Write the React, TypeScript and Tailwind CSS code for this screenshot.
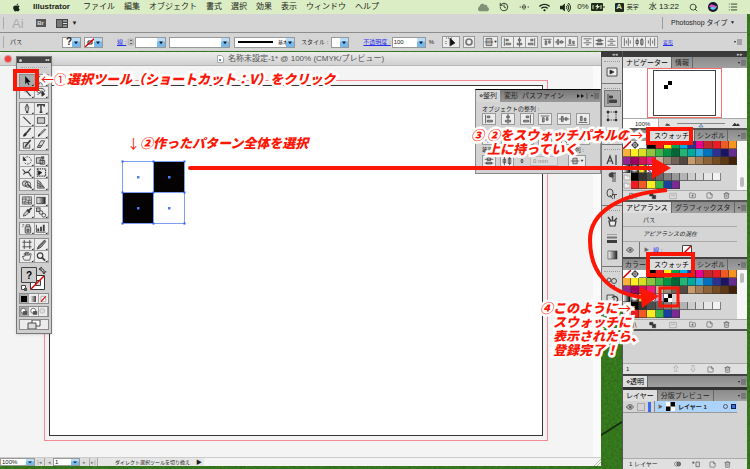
import React from 'react';
import clsx from 'clsx';
import { twMerge } from 'tailwind-merge';
import { FaApple, FaCloud, FaWifi, FaVolumeUp } from 'react-icons/fa';
import { History, Search, Eye, Trash2, FolderPlus, StickyNote, List } from 'lucide-react';

type Shape = React.ReactNode;

const Glyph: React.FC<{ children: Shape; className?: string }> = ({ children, className }) => (
  <svg
    viewBox="0 0 14 12"
    className={twMerge('h-3 w-3.5 shrink-0', className)}
    fill="none"
    stroke="#3c3c3c"
    strokeWidth=".9"
  >
    {children}
  </svg>
);

const toolGroups: [string, Shape][][] = [
  [
    ['選択', <path d="M5 1v9l2-2 1.500 3 1.200-.6L8.300 7.500H11z" fill="#111" stroke="none" />],
    ['ダイレクト選択', <path d="M5 1v9l2-2 1.500 3 1-.5L8.300 7.500H11z" fill="#fff" strokeWidth=".8" />],
    ['自動選択', <><path d="M6 4l5 6" strokeWidth="1.500" /><path d="M5 1v5M2.500 3.500h5" strokeWidth=".6" /></>],
    ['なげなわ', <><path d="M3 3c3-3 8-1 8 1s-4 3-7 2 0-3 2-2-1 4-3 4" /><path d="M8 4v6l3-2z" fill="#222" /></>],
  ],
  [
    ['ペン', <><path d="M7 1L5 5l1 4h2l1-4zM7 2v4" fill="#ddd" /><path d="M6 10h2.500" strokeWidth="2" /></>],
    ['文字', <path d="M3.500 4V2h7v2M7 2v8M5.500 10h3" strokeWidth="1.600" />],
    ['直線', <path d="M3 2l8 8" strokeWidth="1.200" />],
    ['長方形', <rect x="3" y="3" width="8" height="6" fill="#c8c8c8" />],
    ['ブラシ', <><path d="M11 1L6 7" strokeWidth="1.800" /><path d="M3 10c1-3 2-4 3-3s0 3-3 3z" fill="#222" /></>],
    ['鉛筆', <><path d="M11 2L5 8 4 10l2-1 6-6z" fill="#ccc" /><path d="M4 10l2-2" strokeWidth="1.500" /></>],
    ['塗りブラシ', <><path d="M9 4H3v6h7V6" fill="#ddd" /><path d="M11 1L6 7l-1 2" strokeWidth="1.800" /></>],
    ['消しゴム', <><path d="M7 2h4L7 9H3z" fill="#ddd" /><path d="M4 7h4M3 9h4" /></>],
  ],
  [
    ['回転', <><path d="M4 4a4 4 0 117 4c-2 3-6 2-7 0" strokeDasharray="2 1" /><path d="M3 2v4h3z" fill="#222" /></>],
    ['拡大縮小', <><path d="M2 3h7v6H2zM6 6h5v4H6z" fill="#ccc" /><path d="M5 6l5-4M7 2h3v3" /></>],
    ['ワープ', <><path d="M2 3c3 0 1 4 5 3s2 4 5 4M3 8c4-5 5 0 8-6" strokeWidth="1.200" /></>],
    ['自由変形', <><path d="M3 2h9v8H3z" strokeDasharray="1.500 1" strokeWidth="1.300" /><path d="M4 4v5l4-3z" fill="#111" /></>],
    ['シェイプ形成', <><circle cx="5" cy="5" r="3" fill="#ccc" /><circle cx="8" cy="6" r="3" /><path d="M8 6l4 4" strokeWidth="1.500" /></>],
    ['遠近グリッド', <><path d="M3 1v9h8L6 3z" fill="#bbb" strokeWidth=".7" /><path d="M3 4l6 4M3 7l7 2M6 3v7" strokeWidth=".7" /></>],
  ],
  [
    ['メッシュ', <><path d="M2 2h10v8H2z" fill="#ccc" strokeWidth=".7" /><path d="M2 5c4-3 5 4 10 0M2 8c4-2 6 2 10 0M5 2c3 3-2 5 0 8M9 2c2 3-2 5 0 8" strokeWidth=".7" /></>],
    ['グラデーション', <rect x="2.500" y="2.500" width="9" height="7" fill="url(#tone)" />],
    ['スポイト', <><path d="M3 10l1-3 4-4 2 2-4 4z" fill="#ccc" /><path d="M7 3l3 3M9 4l3-3" strokeWidth="2" /></>],
    ['ブレンド', <><rect x="2" y="1" width="4" height="4" fill="#bbb" /><circle cx="7" cy="6" r="2" fill="#ddd" /><circle cx="10" cy="9" r="2" fill="#eee" /></>],
  ],
  [
    ['スプレー', <><rect x="5" y="4" width="6" height="7" rx="1" fill="#bbb" /><path d="M6 4V2h4v2M2 2h2M2 4h1M7 7h2v2H7z" /></>],
    ['グラフ', <><path d="M2 2v8h10" /><path d="M4 9V6M7 9V4M10 9V2" strokeWidth="2" /></>],
  ],
  [
    ['アートボード', <path d="M4 1v10M10 1v10M2 3.500h10M2 8.500h10" strokeWidth=".9" />],
    ['スライス', <><path d="M11 1L5 7l-2 4 4-2 5-6z" fill="#999" /><path d="M3 10L11 2" /></>],
    ['手のひら', <path d="M4 10L2 6l2 0V2.500l1.500 0V5 1.500H7V5l.5-3.500H9V5l1-2h1.500L10 10z" fill="#eee" strokeWidth=".8" />],
    ['ズーム', <><circle cx="6" cy="5" r="3" fill="#eee" strokeWidth="1.300" /><path d="M8 7l3.500 3.500" strokeWidth="2" /></>],
  ],
];

const alignShapes: Shape[] = [
  <><path d="M3 1v10" /><path d="M5 2.500h3v2H5zM5 7.500h6v2H5z" fill="#aaa" strokeWidth=".8" /></>,
  <><path d="M7 0v12" /><path d="M5.500 2.500h3v2h-3zM4 7.500h6v2H4z" fill="#aaa" strokeWidth=".8" /></>,
  <><path d="M11 1v10" /><path d="M6 2.500h3v2H6zM3 7.500h6v2H3z" fill="#aaa" strokeWidth=".8" /></>,
  <><path d="M2 2.500h10" /><path d="M4 4.500h2v5H4zM8.500 4.500h2v3h-2z" fill="#aaa" strokeWidth=".8" /></>,
  <><path d="M1 6h12" /><path d="M4 3h2v6H4zM8.500 4.500h2v3h-2z" fill="#aaa" strokeWidth=".8" /></>,
  <><path d="M2 10h10" /><path d="M4 3h2v5H4zM8.500 5h2v3h-2z" fill="#aaa" strokeWidth=".8" /></>,
];

const distributeShapes: Shape[] = [
  <path d="M2 2h10M5 4.500h4M2 7h10M5 9.500h4" />,
  <path d="M2 4h10M5 2.500h4v3H5zM2 8.500h10M4 7.500h6v2H4z" />,
  <path d="M5 2.500h4M2 5h10M5 7.500h4M2 10h10" />,
];

const spreadShapes: Shape[] = [
  <path d="M3 1v10M5.500 4v4M8 1v10M10.500 4v4" />,
  <path d="M4 1v10M2.500 4h3v4h-3zM10 1v10M8.500 3h3v6h-3z" />,
  <path d="M3 4v4M5.500 1v10M8.500 4v4M11 1v10" />,
];

const processColors = [
  '#fbb03b', '#fcee21', '#d9e021', '#8cc63f', '#39b54a', '#009245', '#006837', '#22b573', '#00a99d', '#29abe2', '#0071bc', '#2e3192', '#1b1464', '#662d91',
  '#93278f', '#9e005d', '#d4145a', '#ed1e79', '#c7b299', '#998675', '#736357', '#534741', '#c69c6d', '#a67c52', '#8c6239', '#754c24', '#603813', '#42210b',
];
const baseColors = ['#ffffff', '#000000', '#ed1c24', '#fff200', '#00a651', '#00aeef', '#2e3192', '#ec008c', '#c1272d', '#ed1c24', '#f15a24', '#f7931e'];
const grays = ['#000', '#333', '#4d4d4d', '#666', '#808080', '#999', '#b3b3b3', '#ccc', '#dadada', '#e6e6e6', '#f2f2f2'];
const brights = ['#ed1c24', '#f15a24', '#fcee21', '#39b54a', '#1b3fa0', '#7a2a91'];

const IconButton: React.FC<{ label: string; children: Shape; className?: string }> = ({ label, children, className }) => (
  <button type="button" aria-label={label} className={clsx('flex items-center justify-center overflow-hidden', className)}>
    {children}
  </button>
);

const BlueArrow = () => (
  <svg viewBox="0 0 8 10" preserveAspectRatio="none" className="pointer-events-none absolute inset-y-0 right-0 h-full w-2">
    <rect width="8" height="10" fill="#78b9ec" />
    <rect width="8" height="4" fill="#b9dcf7" />
    <path d="M2 4h4L4 7z" fill="#0b1c33" />
  </svg>
);

interface DropProps {
  label: string;
  value?: string;
  className?: string;
  children?: Shape;
}

const Drop: React.FC<DropProps> = ({ label, value = '', className, children }) => (
  <span className={twMerge('relative flex h-[11px] shrink-0 items-center border border-[#999] bg-white', className)}>
    {children}
    <select
      aria-label={label}
      defaultValue={value}
      className="absolute inset-0 h-full w-full appearance-none bg-transparent pl-px text-[6px] leading-none outline-none"
    >
      <option value={value}>{value}</option>
    </select>
    <BlueArrow />
  </span>
);

const PanelMenu = () => (
  <svg viewBox="0 0 8 6" className="my-auto mr-px ml-auto h-1.5 w-2 shrink-0" stroke="#333" strokeWidth=".6">
    <path d="M3 1h5M3 3h5M3 5h5" />
    <path d="M0 2h2L1 4z" fill="#222" stroke="none" />
  </svg>
);

const Tabs: React.FC<{ items: string[]; active: number }> = ({ items, active }) => (
  <div className="flex h-[11px] shrink-0 items-stretch bg-linear-to-b from-[#8b8b8b] to-[#a0a0a0] text-[7px] leading-[11px]" role="tablist">
    {items.map((t, i) => (
      <button
        key={t}
        type="button"
        role="tab"
        aria-selected={i === active}
        className={clsx(
          'shrink-0 border-r border-[#666] whitespace-nowrap',
          items.length > 2 && i !== active ? 'px-0.5' : items.length > 2 ? 'px-[5px]' : 'px-[3px]',
          i === active ? 'bg-[#dedede] text-black' : 'text-[#222]'
        )}
      >
        {t}
      </button>
    ))}
    <PanelMenu />
  </div>
);

const MenuBar = () => (
  <header className="flex h-3.5 shrink-0 items-center bg-[#daedc4] pr-3 pl-3 text-[8px] leading-none text-[#1c2418]">
    <FaApple className="mr-3 size-[9px]" />
    <nav className="flex items-center gap-[9px] whitespace-nowrap">
      <strong className="mr-1">Illustrator</strong>
      {['ファイル', '編集', 'オブジェクト', '書式', '選択', '効果', '表示', 'ウィンドウ', 'ヘルプ'].map(m => (
        <button key={m} type="button">{m}</button>
      ))}
    </nav>
    <div className="ml-auto flex items-center gap-2.5 whitespace-nowrap">
      <FaCloud className="size-[11px] text-[#829079]" />
      <History className="size-[10px]" />
      <Glyph className="w-2.5"><path d="M1 6h2M5 4v4M7 2v8M9 4v4M12 6h2" strokeWidth="1.300" /></Glyph>
      <FaWifi className="size-[11px]" />
      <span className="flex items-center gap-1.5">
        <FaVolumeUp className="size-[11px]" />
        <span>0%</span>
        <svg viewBox="0 0 14 8" className="-ml-1 h-2 w-3.5">
          <rect width="12" height="8" rx="1" fill="#20291b" />
          <path d="M13 3v2" stroke="#20291b" />
          <path d="M7 1L4 4h2L5 7l4-4H7z" fill="#daedc4" />
          <path d="M2 2v4M10 2v4" stroke="#daedc4" />
        </svg>
      </span>
      <span className="flex items-center gap-[3px]">
        <span className="flex size-[9px] items-center justify-center rounded-[1px] bg-[#20291b] font-bold text-[#daedc4]">A</span>
        <span className="text-[6px]">英字</span>
      </span>
      <span>水 13:22</span>
      <Search className="size-[9px]" />
      <svg viewBox="0 0 10 10" className="size-[10px]">
        <circle cx="5" cy="5" r="5" fill="#17152c" />
        <path d="M1 5c2-5 5-1 8-1-2 5-5 1-8 1z" fill="#d552bf" />
        <path d="M2 6c3-3 4 2 7-2-1 4-5 5-7 2z" fill="#4cd6ee" />
      </svg>
      <List className="size-[10px]" />
    </div>
  </header>
);

const AppBar = () => (
  <div className="flex h-[19px] shrink-0 items-center border-b border-[#8d8d8d] bg-[#d5d5d5] pr-3 pl-[3px] text-[7px]">
    <span className="mr-2 h-3 w-px bg-[#aaa]" />
    <span className="text-[13px] leading-none text-[#aaa]">Ai</span>
    <span className="ml-3 flex h-2 w-2.5 items-center justify-center bg-[#555] text-[6px] font-bold text-[#ddd]">Br</span>
    <svg viewBox="0 0 12 9" className="ml-2.5 h-[9px] w-3">
      <rect width="12" height="9" fill="#444" />
      <path d="M1 1h5v7H1z" fill="#777" />
      <path d="M7 2h4M7 4.500h4M7 7h4" stroke="#ddd" />
    </svg>
    <span className="ml-1 text-[6px]">▼</span>
    <label className="ml-auto flex h-3 items-center border-l border-[#999] pl-2">
      <select aria-label="ワークスペース" className="appearance-none bg-transparent whitespace-nowrap outline-none">
        <option>Photoshop タイプ</option>
      </select>
      <span className="ml-0.5 text-[5px]">▼</span>
    </label>
  </div>
);

const ButtonStrip: React.FC<{ name: string; shapes: Shape[] }> = ({ name, shapes }) => (
  <span className="flex h-3 border-y border-l border-[#999]">
    {shapes.map((s, i) => (
      <IconButton key={i} label={`${name}${i + 1}`} className="w-3 border-r border-[#999] bg-[#ededed]">
        <Glyph className="h-2.5 w-[11px]">{s}</Glyph>
      </IconButton>
    ))}
  </span>
);

const ControlBar = () => (
  <div className="flex h-[18px] shrink-0 items-center overflow-hidden bg-[#d5d5d5] pr-1 pl-[3px] text-[6px] leading-none whitespace-nowrap">
    <span className="mr-1.5 h-3 w-px bg-[#aaa]" />
    <span className="w-[52px]">パス</span>
    <Drop label="塗り" className="w-[19px]"><b className="pl-[3px] text-[10px]">?</b></Drop>
    <Drop label="線" className="ml-[3px] w-[19px]">
      <svg viewBox="0 0 10 9" className="h-[9px] w-2.5"><path d="M3 3h4v3H3z" fill="none" stroke="#222" /><path d="M0 9L10 0" stroke="#d00" strokeWidth="1.400" /></svg>
    </Drop>
    <a href="#stroke" className="ml-3.5 w-2.5 text-[#2630ee] underline">線 :</a>
    <Glyph className="w-2"><path d="M2 1h9v10H2zM2 6h9" fill="#ddd" stroke="#888" /><path d="M4 4l3-2 3 2zM4 8l3 2 3-2z" fill="#222" stroke="none" /></Glyph>
    <Drop label="線幅" className="w-[31px]" />
    <Drop label="可変線幅" className="ml-[3px] w-[61px]" />
    <Drop label="ブラシ定義" className="ml-1 w-[61px]"><span className="mx-[3px] h-0.5 w-[35px] bg-black" /><span className="ml-0.5 text-[5px]">基本</span></Drop>
    <span className="ml-1.5">スタイル :</span>
    <Drop label="スタイル" className="ml-[3px] w-[18px]" />
    <a href="#opacity" className="ml-3.5 text-[#2630ee] underline">不透明度 :</a>
    <span className="relative ml-px flex h-[11px] w-[34px] border border-[#999] bg-white">
      <input aria-label="不透明度" defaultValue="100" className="w-full pl-px text-[6px] outline-none" />
      <BlueArrow />
    </span>
    <span className="ml-[3px]">%</span>
    <div className="ml-2 flex items-center gap-[3px]">
      <IconButton label="類似オブジェクト" className="h-3 w-[18px] border border-[#999] bg-[#ededed]">
        <Glyph><path d="M2 2h3M7 2h2M2 5v3" strokeDasharray="1 1" /><path d="M6 2v8l5-3z" fill="#111" /></Glyph>
      </IconButton>
      <IconButton label="オブジェクトを再配色" className="h-3 w-3 border border-[#999] bg-[#ededed]">
        <Glyph className="w-3"><circle cx="7" cy="6" r="3.500" stroke="#777" strokeWidth="2" /></Glyph>
      </IconButton>
      <IconButton label="整列基準" className="ml-[5px] h-3 w-[15px] border border-[#999] bg-[#ededed]">
        <Glyph className="w-2.5"><path d="M3 1h8v10H3z" fill="#bbb" /><path d="M1 6h12" /></Glyph><span className="text-[4px]">▼</span>
      </IconButton>
      <ButtonStrip name="水平方向整列" shapes={alignShapes.slice(0, 3)} />
      <ButtonStrip name="垂直方向整列" shapes={alignShapes.slice(3)} />
      <ButtonStrip name="垂直方向分布" shapes={distributeShapes} />
      <ButtonStrip name="水平方向分布" shapes={spreadShapes} />
    </div>
    <a href="#transform" className="ml-[5px] text-[5px] text-[#2630ee] underline">変形</a>
    <PanelMenu />
  </div>
);

const ToolPanel = () => (
  <aside aria-label="ツール" className="absolute top-1 left-4 z-10 w-9 border border-[#777] bg-[#cfcfcf] shadow">
    <div className="flex h-1.5 items-center justify-between bg-[#444] px-0.5 text-[4px] text-white">
      <span className="size-[3px] rounded-full bg-[#ccc]" /><span>◂◂</span>
    </div>
    <div className="mx-1 my-1 border-t border-dotted border-[#aaa]" />
    <div className="flex flex-col gap-[3px] px-[2px] pt-[2px]">
      {toolGroups.map((g, gi) => (
        <div key={gi} className="grid grid-cols-2 border-t border-l border-[#8c8c8c]">
          {g.map(([label, shape], i) => (
            <IconButton
              key={label}
              label={label}
              className={clsx(
                'h-3 border-r border-b border-[#a0a0a0]',
                gi === 0 && i === 0 ? 'bg-[#a9a9a9]' : 'bg-[#ececec]'
              )}
            >
              <Glyph className="h-[11px]">{shape}<path d="M14 12v-2l-2 2z" fill="#111" stroke="none" /></Glyph>
            </IconButton>
          ))}
        </div>
      ))}
    </div>
    <svg viewBox="0 0 34 30" className="h-[30px] w-[34px]">
      <defs>
        <linearGradient id="tone"><stop stopColor="#fff" /><stop offset="1" stopColor="#222" /></linearGradient>
      </defs>
      <path d="M13.500 12.500h14v14h-14z" fill="#fff" stroke="#333" />
      <path d="M18.500 17.500h5v5h-5z" fill="#ddd" stroke="#444" />
      <path d="M14 26L27 13" stroke="#d00" strokeWidth="1.500" />
      <path d="M4.500 4.500h15v15h-15z" fill="#ccc" stroke="#444" />
      <path d="M23 6q5-1 4 4M25 4l-3 2 3 2M25 8l2 3 2-3" fill="none" stroke="#333" />
      <path d="M4.500 22.500h4v4h-4z" fill="#fff" stroke="#444" />
      <path d="M7 25h3v3H7z" fill="#555" />
      <text x="12" y="16" textAnchor="middle" className="text-[10px] font-bold">?</text>
    </svg>
    <div className="mx-[2px] grid grid-cols-3 border border-[#8c8c8c] bg-[#ececec]">
      <IconButton label="カラー" className="h-[9px] border-r border-[#a0a0a0] bg-[#aaa]"><span className="size-1.5 bg-black" /></IconButton>
      <IconButton label="グラデ" className="h-[9px] border-r border-[#a0a0a0]"><span className="size-1.5 bg-linear-to-r from-white to-[#444]" /></IconButton>
      <IconButton label="なし" className="h-[9px]"><Glyph className="h-2 w-2.5"><path d="M4 2h7v8H4z" fill="#fff" stroke="#888" /><path d="M4 10l7-8" stroke="#d00" strokeWidth="1.600" /></Glyph></IconButton>
    </div>
    <div className="mx-[2px] mt-0.5 grid grid-cols-3 border border-[#8c8c8c] bg-[#ececec]">
      {['標準描画', '背面描画', '内側描画'].map((l, i) => (
        <IconButton key={l} label={l} className={clsx('h-[9px] border-r border-[#a0a0a0]', i === 0 && 'bg-[#aaa]')}>
          <Glyph className="h-[9px] w-2.5"><circle cx="6" cy="5" r="3.500" fill={i === 2 ? '#ddd' : '#fff'} stroke={i === 2 ? '#aaa' : '#333'} />{i < 2 && <path d="M6 6h5v4H6z" fill="#555" />}</Glyph>
        </IconButton>
      ))}
    </div>
    <IconButton label="スクリーンモード" className="mx-[2px] mt-0.5 mb-[3px] h-[11px] w-[30px] border border-[#8c8c8c] bg-[#ececec]">
      <Glyph><path d="M5 1h8v6H5z" fill="#fff" /><path d="M1 4h8v6H1z" fill="#ddd" /></Glyph>
    </IconButton>
  </aside>
);

const Checker = () => (
  <svg viewBox="-2 -2 67 67" className="h-[67px] w-[67px]">
    <path d="M.5.5h31v31H.5zM31.500 31.500h31v31h-31z" fill="#fff" />
    <path d="M31.500.5h31v31h-31zM.5 31.500h31v31H.5z" fill="#050203" />
    <path d="M.5.5h62v62H.5zM31.500.5v62M.5 31.500h62" fill="none" stroke="#7d9ff0" />
    {[0, 31, 62].map(x => [0, 31, 62].map(y => <rect key={`${x}-${y}`} x={x - 0.5} y={y - 0.5} width="2" height="2" fill="#2c5df0" />))}
    {[16, 47].map(x => [16, 47].map(y => <rect key={`${x}-${y}`} x={x - 1} y={y - 1} width="2.500" height="2.500" fill="#4e7cf2" />))}
  </svg>
);

const AlignPanel = () => (
  <section aria-label="整列" className="absolute top-[37px] right-0 w-[126px] border border-[#8a8a8a] border-t-black bg-[#d3d3d3] text-[6px]">
    <div className="flex h-3 items-center bg-linear-to-b from-[#777] to-[#999] text-[7px] leading-3 whitespace-nowrap">
      <button type="button" className="h-full bg-[#d8d8d8] px-[3px]">⋄整列</button>
      <button type="button" className="pl-1">変形</button>
      <button type="button" className="pl-1">パスファイン</button>
      <svg viewBox="0 0 12 6" className="ml-auto h-1.5 w-3"><path d="M1 1l3 2-3 2zM5 1l3 2-3 2z" fill="#111" /><path d="M11 0v6" stroke="#555" /></svg>
      <span className="w-3"><PanelMenu /></span>
    </div>
    <div className="flex flex-col px-1.5">
      <span className="mt-[3px] h-2 leading-2">オブジェクトの整列 :</span>
      <div className="flex justify-between pr-1">
        {alignShapes.map((s, i) => (
          <IconButton key={i} label={`整列${i + 1}`} className="h-3 w-3.5 border border-[#999] bg-[#ededed]"><Glyph className="w-3">{s}</Glyph></IconButton>
        ))}
      </div>
      <div className="mt-2 flex justify-between pr-1">
        {[...distributeShapes, ...spreadShapes].map((s, i) => (
          <IconButton key={i} label={`分布${i + 1}`} className="h-3 w-3.5 border border-[#999] bg-[#ededed]"><Glyph className="w-3">{s}</Glyph></IconButton>
        ))}
      </div>
      <div className="flex h-2.5 items-center justify-between pr-2.5"><span>等間隔</span><span>整列 :</span></div>
      <div className="mb-1.5 flex items-center gap-1">
        <IconButton label="垂直方向等間隔" className="h-3 w-3.5 border border-[#999] bg-[#ededed]"><Glyph className="w-3">{distributeShapes[1]}</Glyph></IconButton>
        <IconButton label="水平方向等間隔" className="h-3 w-3.5 border border-[#999] bg-[#ededed]"><Glyph className="w-3">{spreadShapes[1]}</Glyph></IconButton>
        <Glyph className="w-2"><path d="M4 5l3-3 3 3zM4 7l3 3 3-3z" fill="#333" stroke="none" /></Glyph>
        <input aria-label="間隔" defaultValue="0 mm" className="h-2.5 w-7 border border-[#bbb] bg-[#ddd] pl-0.5 text-[#888]" />
        <IconButton label="整列基準" className="mr-2 ml-auto h-3 w-[18px] border border-[#999] bg-[#ededed]"><Glyph className="w-2.5"><path d="M4 2h6v8H4z" fill="#bbb" /><path d="M1 6h12" /></Glyph><span className="text-[4px]">▼</span></IconButton>
      </div>
    </div>
  </section>
);

const StatusBar = () => (
  <footer className="flex h-[9px] shrink-0 items-center border-t border-[#ccc] bg-[#f4f4f4] text-[6px] leading-none">
    <Drop label="倍率" value="100%" className="h-2 w-[35px]" />
    <button type="button" className="h-2 w-[9px] bg-[#ddd] text-[5px] text-[#777]">|◂</button>
    <button type="button" className="h-2 w-[9px] border-l border-[#aaa] bg-[#ddd] text-[5px] text-[#777]">◂</button>
    <Drop label="ページ" value="1" className="h-2 w-[27px]" />
    <button type="button" className="h-2 w-[9px] bg-[#ddd] text-[5px] text-[#777]">▸</button>
    <button type="button" className="h-2 w-[9px] border-x border-[#aaa] bg-[#ddd] text-[5px] text-[#777]">▸|</button>
    <span className="flex h-2 w-[106px] items-center bg-[#e6e6e6] pl-[17px] text-[5px] whitespace-nowrap">
      ダイレクト選択ツールを切り換え<span className="ml-auto pr-0.5 text-[6px]">▶</span>
    </span>
    <svg viewBox="0 0 8 8" className="ml-auto size-2" stroke="#aaa" strokeWidth=".8"><path d="M1 8l7-7M4 8l4-4" /></svg>
  </footer>
);

const DocumentWindow = () => (
  <main className="relative mt-px mb-[3px] flex min-w-0 flex-1 flex-col bg-[#f4f4f4]">
    <div className="flex h-3.5 shrink-0 items-center justify-center rounded-t border-b border-[#b5b5b5] bg-linear-to-b from-[#ececec] to-[#d0d0d0] text-[8px] leading-none whitespace-nowrap text-[#555]">
      <div className="absolute left-[5px] flex gap-1.5">
        <span className="size-1.5 rounded-full bg-[#ee4340] ring-1 ring-[#d99]" />
        <span className="size-1.5 rounded-full bg-[#f5b62f]" />
        <span className="size-1.5 rounded-full bg-[#30bd3c]" />
      </div>
      <svg viewBox="0 0 7 8" className="mr-1 h-2 w-[7px]"><path d="M.5.5h4l2 2v5h-6z" fill="#fff" stroke="#aaa" /><path d="M2 4h2v2H2z" fill="#58a" /></svg>
      名称未設定-1* @ 100% (CMYK/プレビュー)
    </div>
    <div className="flex min-h-0 flex-1 border-r-8 border-[#fafafa] pt-3.5 pr-[45px] pb-4 pl-11">
      <div className="flex flex-1 border border-[#f48a92] p-[4px]">
        <div className="flex-1 border border-[#333] bg-white pt-[73px] pl-[70px]"><Checker /></div>
      </div>
    </div>
    <StatusBar />
    <ToolPanel />
    <AlignPanel />
  </main>
);

const dockIcons: Shape[][] = [
  [<><path d="M2 2h10v8H2z" fill="#eee" /><path d="M5 4v4l4-2z" fill="#222" /></>],
  [
    <><path d="M3 1v10" /><path d="M4.500 3h3v2h-3zM4.500 7h7v2.500h-7z" fill="#444" /></>,
    <><path d="M3 2h8v8H3z" strokeDasharray="1.500 1" /><path d="M2 1h2v2H2zM10 1h2v2h-2zM2 9h2v2H2zM10 9h2v2h-2z" fill="#222" strokeWidth=".5" /></>,
    <><path d="M2 2h6v6H2z" fill="#eee" /><path d="M6 5h6v6H6z" fill="#777" /></>,
  ],
  [
    <path d="M2 10L5 2l3 8M3 7h4M11 1v10" strokeWidth="1.200" />,
    <><path d="M8 2H6a2 2 0 000 4h2z" fill="#444" /><path d="M8 2v9M10 2v9M6 2h5" /></>,
    <><ellipse cx="5" cy="5" rx="3" ry="4" /><path d="M7 6.500h5M9.500 6.500v4M5 7l3 4" /></>,
  ],
  [
    <><path d="M4 6h7l-1 5H5z" fill="#eee" strokeWidth="1.200" /><path d="M6 6L3 2M7.500 6V1M9 6l3-3" strokeWidth="1.400" /></>,
    <><path d="M2 2.500h10" stroke="#999" /><path d="M2 5.500h10" stroke="#777" strokeWidth="2" /><path d="M2 9.500h10" strokeWidth="3" /></>,
    <rect x="3" y="2" width="9" height="8" fill="url(#tone)" strokeWidth=".6" />,
  ],
  [
    <><circle cx="4" cy="4" r="2" /><circle cx="9" cy="5" r="2.500" /><path d="M6 10h4" strokeWidth="1.500" /></>,
    <><path d="M2 2h7v7H2z" fill="#ddd" /><path d="M7 5a3 3 0 114 4" strokeWidth="1.300" /></>,
  ],
];

const IconDock = () => (
  <div className="w-[21px] shrink-0">
    <div className="h-1.5 bg-[#3a3a3a] pr-1 text-right text-[5px] leading-1.5 text-[#ccc]">◂◂</div>
    <div className="flex flex-col gap-px bg-[#777] pl-px">
      {dockIcons.map((g, gi) => (
        <div key={gi} className="flex flex-col items-center bg-[#d5d5d5] pt-1 pb-[3px]">
          <div className="mb-px w-4 border-t border-dotted border-[#999]" />
          {g.map((s, i) => (
            <IconButton
              key={i}
              label={`パネル${gi + 1}-${i + 1}`}
              className={clsx('h-[17px] w-[17px]', gi === 1 && i === 0 && 'border border-[#777] bg-[#aaa]')}
            >
              <Glyph>{s}</Glyph>
            </IconButton>
          ))}
        </div>
      ))}
    </div>
  </div>
);

const Cell: React.FC<{ color: string }> = ({ color }) => (
  <span className="h-2 border-r border-b border-[#333]/60" style={{ background: color }} />
);

const Folder = () => (
  <svg viewBox="0 0 8 8" className="h-2 w-full"><path d="M1 2h2l1 1h3v4H1z" fill="#eee" stroke="#999" strokeWidth=".7" /></svg>
);

const MiniChecker: React.FC<{ className?: string }> = ({ className }) => (
  <svg viewBox="0 0 4 4" className={className}>
    <rect width="4" height="4" fill="#fff" />
    <path d="M2 0h2v2H2zM0 2h2v2H0z" fill="#000" />
  </svg>
);

const footIcon = 'size-[7px] text-[#555]';

const PanelFooter = () => (
  <div className="flex h-2.5 items-center justify-around border-t border-[#aaa] bg-[#dcdcdc] pr-3">
    <IconButton label="ライブラリ"><Glyph className="h-2 w-2.5"><path d="M2 2h4v8H2zM8 2v8M10 2l2 8" /></Glyph></IconButton>
    <IconButton label="種類"><Glyph className="h-2 w-2.5"><path d="M2 2h5v4H2zM6 5h5v5H6z" fill="#333" /></Glyph></IconButton>
    <IconButton label="オプション"><Glyph className="h-2 w-2.5"><path d="M2 2h10v8H2zM4 5h6" stroke="#999" /></Glyph></IconButton>
    <IconButton label="グループ"><FolderPlus className={footIcon} /></IconButton>
    <IconButton label="新規"><StickyNote className={footIcon} /></IconButton>
    <IconButton label="削除"><Trash2 className={footIcon} /></IconButton>
  </div>
);

const SwatchPanel: React.FC<{ registered?: boolean }> = ({ registered }) => (
  <section aria-label="スウォッチ" className="shrink-0 border-b-2 border-[#555] bg-[#d5d5d5]">
    <Tabs items={['カラー', 'スウォッチ', 'シンボル']} active={1} />
    <div className="flex h-[49px]">
      <div className="grid flex-1 grid-cols-[repeat(14,minmax(0,1fr))] content-start">
        <svg viewBox="0 0 8 8" className="h-2 w-full bg-white"><path d="M0 8L8 0" stroke="#d00" strokeWidth="1.500" /></svg>
        <svg viewBox="0 0 8 8" className="h-2 w-full bg-white" fill="none" stroke="#222"><circle cx="4" cy="4" r="2.500" /><path d="M4 0v8M0 4h8" strokeWidth=".7" /></svg>
        {baseColors.map((c, i) => <Cell key={i} color={c} />)}
        {processColors.map(c => <Cell key={c} color={c} />)}
        <Cell color="linear-gradient(90deg,#fff,#000)" />
        <Cell color="radial-gradient(#fff 30%,#000)" />
        <Cell color="linear-gradient(90deg,#fbb03b,#fcee21,#333)" />
        <Cell color="repeating-linear-gradient(45deg,#eee 0 2px,#b4a 2px 3px)" />
        <Cell color="#c1a6d8" />
        {registered ? <MiniChecker className="h-2 w-full" /> : <span />}
        <span className="col-span-8" />
        <Folder />
        {grays.map(c => <Cell key={c} color={c} />)}
        <span className="col-span-2" />
        <Folder />
        {brights.map(c => <Cell key={c} color={c} />)}
      </div>
      <div className={clsx('flex w-2.5 flex-col bg-[#f7f7f7] p-[3px]', !registered && 'justify-end')}><div className="h-2.5 rounded-full bg-[#bbb]" /></div>
    </div>
    <PanelFooter />
  </section>
);

const MiniNav = () => (
  <svg viewBox="0 0 8 8" className="size-2"><path d="M4 0h4v4H4zM0 4h4v4H0z" fill="#000" /></svg>
);

const Navigator = () => (
  <section aria-label="ナビゲーター" className="shrink-0 border-b-2 border-[#555] bg-white">
    <Tabs items={['ナビゲーター', '情報']} active={0} />
    <div className="ml-6 h-[50px] w-[75px] border border-[#f3706e] px-[5px] py-px">
      <div className="h-full border border-[#444] pt-2.5 pl-2.5"><MiniNav /></div>
    </div>
    <div className="flex h-[10px] items-center gap-1 border-t border-[#aaa] bg-[#e2e2e2] pr-1 text-[6px]">
      <input aria-label="ズーム" defaultValue="100%" className="h-full w-9 border-r border-[#aaa] bg-white pl-3 outline-none" />
      <Glyph className="h-1.5 w-2.5"><path d="M2 9l3-4 2 3 1-2 3 3z" fill="#333" /></Glyph>
      <svg viewBox="0 0 44 8" preserveAspectRatio="none" className="h-2 min-w-0 flex-1"><path d="M0 3.500h44" stroke="#888" /><path d="M20 7l2-3 2 3z" fill="#a5d2ff" stroke="#357" strokeWidth=".5" /></svg>
      <Glyph className="h-2"><path d="M1 9l4-5 3 3 2-2 3 4z" fill="#333" stroke="none" /></Glyph>
    </div>
  </section>
);

const Appearance = () => (
  <section aria-label="アピアランス" className="shrink-0 border-b-2 border-[#444] bg-[#d5d5d5] text-[6px] leading-none">
    <Tabs items={['アピアランス', 'グラフィックスタ']} active={0} />
    <div className="mr-2.5 flex h-3.5 items-center border-b border-[#aaa] pl-5">パス</div>
    <div className="mr-2.5 flex h-[15px] items-center border-b border-[#aaa] pl-5 italic">アピアランスの混在</div>
    <div className="mr-2.5 flex h-[15px] items-center gap-1 pl-[3px]">
      <Eye className="size-2" />
      <span className="ml-px h-full border-l border-[#777]" />
      <span className="text-[5px] text-[#666]">▶</span>
      <a href="#line" className="text-[#2630ee] underline">線 :</a>
      <svg viewBox="0 0 10 10" className="ml-4 size-2.5"><path d="M.5.5h9v9h-9z" fill="#fff" stroke="#444" /><path d="M1 9l8-8" stroke="#d00" strokeWidth="1.500" /></svg>
    </div>
  </section>
);

const Layers = () => (
  <section aria-label="レイヤー" className="flex min-h-0 flex-1 flex-col bg-[#d3d3d3] text-[6px] leading-none">
    <Tabs items={['レイヤー', '分版プレビュー']} active={0} />
    <div className="mr-2.5 flex h-3 shrink-0 items-center gap-[3px] border-b border-[#999] pl-[3px]">
      <Eye className="size-2" />
      <span className="size-2 border border-[#aaa]" />
      <span className="h-2.5 w-[3px] bg-[#3f6bee]" />
      <div className="flex h-full flex-1 items-center gap-[3px] border-l border-[#888] bg-[#acd4fa] pl-[3px]">
        <span className="text-[5px] text-[#666]">▶</span>
        <MiniChecker className="size-[9px]" />
        <b>レイヤー 1</b>
        <span className="ml-auto size-[5px] rounded-full border border-[#556]" />
        <span className="mr-px size-[5px] border border-[#124] bg-[#3f6bee]" />
      </div>
    </div>
    <div className="mt-auto flex h-[11px] items-center justify-between border-t border-[#aaa] bg-[#e0e0e0] pr-4 pl-1.5">
      <span className="w-9">1 レイヤー</span>
      <IconButton label="マスク"><Glyph className="h-2 w-2.5"><circle cx="5" cy="6" r="3" fill="#fff" /><circle cx="8" cy="6" r="3" fill="#777" /></Glyph></IconButton>
      <IconButton label="サブレイヤー"><Glyph className="h-2 w-2.5"><path d="M1 4h4M3 2v4M7 3h5v7H7z" fill="#ddd" /></Glyph></IconButton>
      <IconButton label="新規レイヤー"><StickyNote className={footIcon} /></IconButton>
      <IconButton label="レイヤー削除"><Trash2 className={footIcon} /></IconButton>
    </div>
  </section>
);

const PanelColumn = () => (
  <div className="flex w-[125px] shrink-0 flex-col border-l border-[#555]">
    <div className="h-1.5 shrink-0 bg-[#3a3a3a] pr-1 text-right text-[5px] leading-1.5 text-[#ccc]">▸▸</div>
    <Navigator />
    <SwatchPanel />
    <Appearance />
    <SwatchPanel registered />
    <div className="flex h-[45px] shrink-0 flex-col border-b-2 border-[#444] bg-[#d3d3d3] text-[6px]">
      <div className="mt-auto flex h-[11px] items-center justify-between border-t border-[#aaa] bg-[#e0e0e0] pr-4 pl-[3px]">
        <span className="w-9">1</span>
        <span className="text-[7px] text-[#777]">⇧</span>
        <span className="text-[7px] text-[#777]">⇩</span>
        <StickyNote className={footIcon} />
        <Trash2 className={footIcon} />
      </div>
    </div>
    <Tabs items={['⋄透明']} active={0} />
    <div className="h-[3px] shrink-0 bg-[#333]" />
    <Layers />
  </div>
);

const Leaf = () => (
  <svg className="absolute inset-0 -z-10 h-full w-full" aria-hidden="true">
    <filter id="grain">
      <feTurbulence type="fractalNoise" baseFrequency=".35" numOctaves="3" />
      <feColorMatrix values="0 0 0 0 .03  0 0 0 0 .13  0 0 0 0 .01  1.500 0 0 0 -.4" />
    </filter>
    <rect width="100%" height="100%" fill="#37801f" />
    <rect width="100%" height="100%" filter="url(#grain)" />
    <path d="M595 439l30-19" stroke="#142e0e" strokeWidth="2" />
  </svg>
);

const Note: React.FC<{ className: string; children: Shape }> = ({ className, children }) => (
  <p className={clsx("absolute font-['Noto_Sans_CJK_JP',sans-serif] text-[13px] leading-[14px] font-black whitespace-nowrap text-[#fb1606] italic [-webkit-text-stroke:5px_white] [paint-order:stroke_fill]", className)}>
    {children}
  </p>
);

const Thin: React.FC<{ children: Shape }> = ({ children }) => <span className="font-normal not-italic">{children}</span>;

const Annotations = () => (
  <div className="pointer-events-none absolute inset-0 z-20">
    <Note className="top-[72px] left-[41px]"><Thin>←①</Thin>選択ツール（ショートカット：V）をクリック</Note>
    <Note className="top-[136px] left-[127px]"><Thin>↓</Thin>②作ったパターン全体を選択</Note>
    <Note className="top-[128px] left-[471px]">
      ③ ②をスウォッチパネルの<Thin>→</Thin>
      <span className="block pl-4">上に持っていく</span>
    </Note>
    <Note className="top-[301px] left-[540px]">
      ④このように<Thin>→</Thin>
      <span className="block pl-[13px]">スウォッチに<br />表示されたら、<br />登録完了！</span>
    </Note>
    <svg className="absolute inset-0 h-full w-full" fill="none" stroke="#fb1606">
      <path d="M190 168h464" strokeWidth="4" strokeLinecap="round" />
      <path d="M652 157l19 11-19 11z" fill="#fb1606" stroke="none" />
      <path d="M667 190C620 194 590 212 590 240c0 34 20 53 51 57" strokeWidth="4" />
      <path d="M640 287l19 9-17 12z" fill="#fb1606" stroke="none" />
      <g strokeWidth="4">
        <rect x="15" y="71" width="22" height="18" />
        <rect x="648" y="129" width="43" height="14" />
        <rect x="648" y="254" width="45" height="21" />
        <rect x="660" y="288" width="18" height="18" strokeWidth="3" />
      </g>
    </svg>
  </div>
);

export default function App() {
  return (
    <div className="relative isolate flex h-screen min-h-[469px] flex-col overflow-hidden font-['Liberation_Sans','Noto_Sans_CJK_JP',sans-serif] text-[#222]">
      <Leaf />
      <MenuBar />
      <div className="mr-[3px] flex min-h-0 flex-1 flex-col">
        <AppBar />
        <ControlBar />
        <div className="flex min-h-0 flex-1">
          <DocumentWindow />
          <IconDock />
          <PanelColumn />
        </div>
      </div>
      <Annotations />
    </div>
  );
}
